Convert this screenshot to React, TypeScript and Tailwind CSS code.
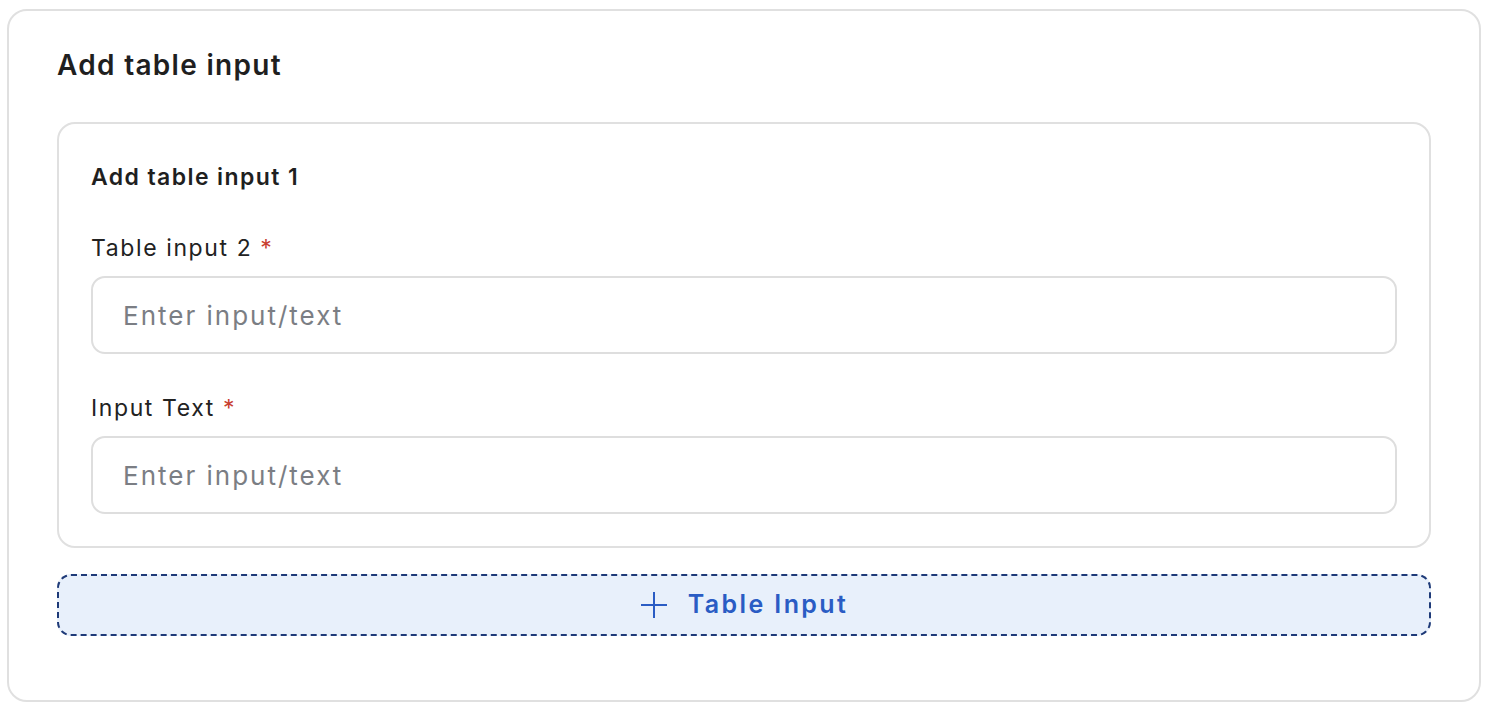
import React from "react";

const font = { fontFamily: "Inter, 'Noto Sans', sans-serif" };

function Field({ label, top }: { label: string; top: string }) {
  return (
    <div className={top}>
      <div className="text-[23px] leading-[28px] tracking-[1.6px] text-[#222222]">
        {label} <span className="text-[#c8402f]">*</span>
      </div>
      <input
        type="text"
        placeholder="Enter input/text"
        className="mt-[14px] block h-[78px] w-full rounded-[14px] border-2 border-[#dedede] bg-white pl-[30px] text-[26px] tracking-[2px] text-[#222222] outline-none placeholder:text-[#7b7e84]"
      />
    </div>
  );
}

export default function App() {
  return (
    <div className="h-[706px] w-[1490px] bg-white pt-[9px] pl-[7px]" style={font}>
      <div className="h-[693px] w-[1474px] rounded-[20px] border-2 border-[#e0e0e0] bg-white px-[48px] pt-[38px]">
        <div className="text-[28px] font-semibold leading-[32px] tracking-[1.3px] text-[#1f1f1f]">Add table input</div>
        <div className="mt-[41px] rounded-[18px] border-2 border-[#e0e0e0] px-[32px] pt-[39px] pb-[32px]">
          <div className="text-[23px] font-semibold leading-[28px] tracking-[1.4px] text-[#1f1f1f]">Add table input 1</div>
          <Field label="Table input 2" top="mt-[43px]" />
          <Field label="Input Text" top="mt-[40px]" />
        </div>
        <button
          type="button"
          className="mt-[26px] flex h-[62px] w-full items-center justify-center gap-[20px] rounded-[14px] border-2 border-dashed border-[#1e3a78] bg-[#e8f0fb] text-[25px] font-semibold tracking-[2.4px] text-[#2a5cc4]"
        >
          <svg width="28" height="28" viewBox="0 0 28 28" fill="none" stroke="#2a5cc4" strokeWidth="2">
            <path d="M14 1v26M1 14h26" />
          </svg>
          <span>Table Input</span>
        </button>
      </div>
    </div>
  );
}
